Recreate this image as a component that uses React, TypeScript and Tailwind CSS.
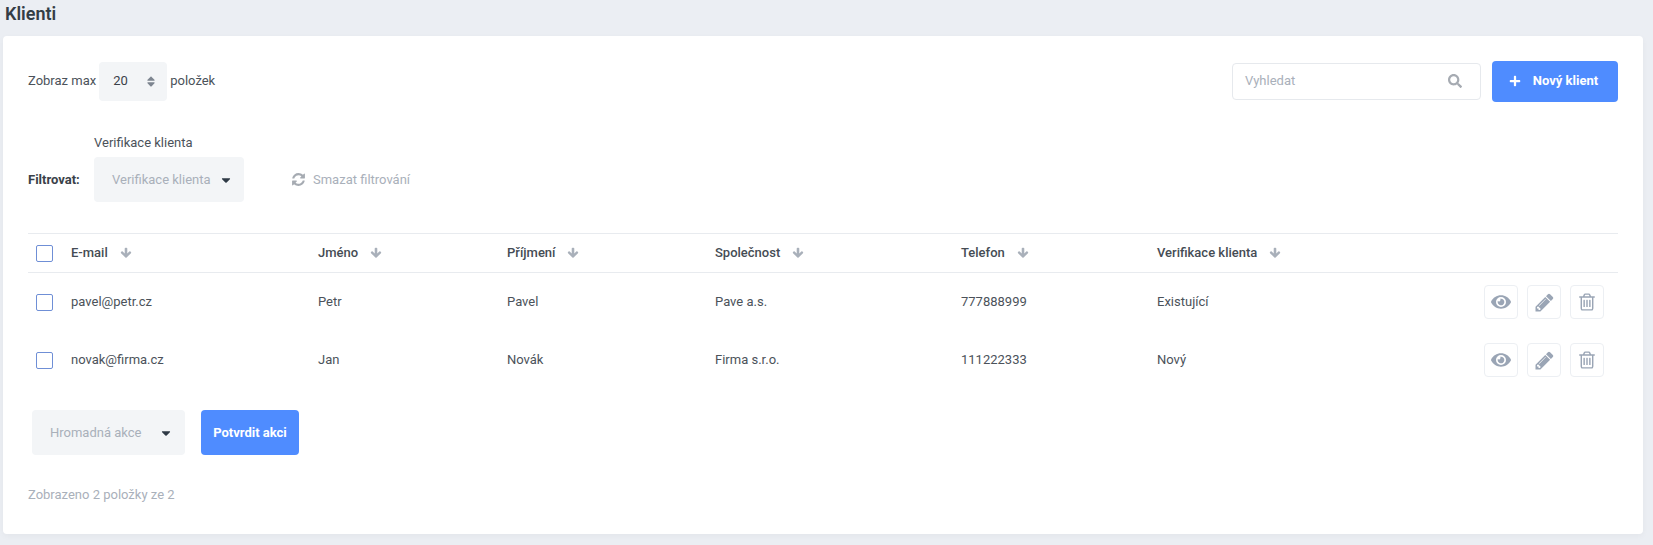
import { FaPlus, FaSearch, FaSort, FaCaretDown, FaEye } from "react-icons/fa";

const columns = "grid grid-cols-[35px_247px_189px_208px_246px_196px_1fr_auto] items-center";

const paths = {
  pencil: "M491 1536l91-91-235-235-91 91v107h128v128h107zm523-928q0-22-22-22-10 0-17 7l-542 542q-7 7-7 17 0 22 22 22 10 0 17-7l542-542q7-7 7-17zm-54-192l416 416-832 832h-416v-416zm683 96q0 53-37 90l-166 166-416-416 166-165q36-38 90-38 53 0 91 38l235 234q37 39 37 91z",
  trash: "M704 736v576q0 14-9 23t-23 9h-64q-14 0-23-9t-9-23v-576q0-14 9-23t23-9h64q14 0 23 9t9 23zm256 0v576q0 14-9 23t-23 9h-64q-14 0-23-9t-9-23v-576q0-14 9-23t23-9h64q14 0 23 9t9 23zm256 0v576q0 14-9 23t-23 9h-64q-14 0-23-9t-9-23v-576q0-14 9-23t23-9h64q14 0 23 9t9 23zm128 724v-948h-896v948q0 22 7 40.500t14.500 27 10.500 8.500h832q3 0 10.500-8.500t14.500-27 7-40.500zm-672-1076h448l-48-117q-7-9-17-11h-317q-10 2-17 11zm928 32v64q0 14-9 23t-23 9h-96v948q0 83-47 143.500t-113 60.500h-832q-66 0-113-58.500t-47-141.500v-952h-96q-14 0-23-9t-9-23v-64q0-14 9-23t23-9h309l70-167q15-37 54-63t79-26h320q40 0 79 26t54 63l70 167h309q14 0 23 9t9 23z",
  refresh: "M1639 1056q0 5-1 7-64 268-268 434.500t-478 166.500q-146 0-282.500-55t-243.500-157l-129 129q-19 19-45 19t-45-19-19-45v-448q0-26 19-45t45-19h448q26 0 45 19t19 45-19 45l-137 137q71 66 161 102t187 36q134 0 250-65t186-179q11-17 53-117 8-23 30-23h192q13 0 22.500 9.500t9.500 22.500zm25-800v448q0 26-19 45t-45 19h-448q-26 0-45-19t-19-45 19-45l138-138q-148-137-349-137-134 0-250 65t-186 179q-11 17-53 117-8 23-30 23h-199q-13 0-22.500-9.500t-9.500-22.500v-7q65-268 270-434.500t480-166.500q146 0 284 55.500t245 156.500l130-129q19-19 45-19t45 19 19 45z",
  arrow: "M1675 832q0 53-37 90l-651 652q-39 37-91 37-53 0-90-37l-651-652q-38-36-38-90 0-53 38-91l74-75q39-37 91-37 53 0 90 37l294 294v-704q0-52 38-90t90-38h128q52 0 90 38t38 90v704l294-294q37-37 90-37 52 0 91 37l75 75q37 39 37 91z",
};

function Icon({ d, className }: { d: string; className: string }) {
  return (
    <svg viewBox="0 0 1792 1792" fill="currentColor" className={className}>
      <path d={d} />
    </svg>
  );
}

function Checkbox() {
  return <span className="block w-[17px] h-[17px] rounded-[2px] border border-[#6f8fd6] bg-white" />;
}

function Head({ label }: { label: string }) {
  return (
    <div className="flex items-center gap-[12px] font-medium text-[#454c54]">
      <span>{label}</span>
      <Icon d={paths.arrow} className="text-[#a9b0ba] w-[12px] h-[12px]" />
    </div>
  );
}

function RowActions() {
  return (
    <div className="flex justify-end gap-[9px] pr-[14px]">
      <button className="w-[34px] h-[34px] flex items-center justify-center border border-[#eceff3] rounded-[4px] text-[#9aa5b5]"><FaEye className="w-[20px] h-[20px]" /></button>
      <button className="w-[34px] h-[34px] flex items-center justify-center border border-[#eceff3] rounded-[4px] text-[#9aa5b5]"><Icon d={paths.pencil} className="w-[21px] h-[21px]" /></button>
      <button className="w-[34px] h-[34px] flex items-center justify-center border border-[#eceff3] rounded-[4px] text-[#9aa5b5]"><Icon d={paths.trash} className="w-[20px] h-[20px]" /></button>
    </div>
  );
}

function Row({ cells }: { cells: string[] }) {
  return (
    <div className={`${columns} h-[58px] pl-[8px] text-[#4b525a]`}>
      <Checkbox />
      {cells.map((c) => <span key={c}>{c}</span>)}
      <RowActions />
    </div>
  );
}

export default function App() {
  return (
    <div className="min-h-[545px] bg-[#ebeef3] text-[13px] text-[#4b525a] font-['Roboto',sans-serif] overflow-hidden">
      <h1 className="h-[36px] pl-[5px] pt-[2px] text-[18px] leading-[24px] font-semibold text-[#343d46]">Klienti</h1>
      <main className="ml-[3px] w-[1640px] h-[498px] bg-white rounded-[4px] px-[25px] pt-[25px] shadow-[0_2px_6px_rgba(0,0,0,0.04)]">
        <div className="flex items-center justify-between h-[40px]">
          <div className="flex items-center gap-[3px]">
            <span>Zobraz max</span>
            <div className="w-[68px] h-[39px] bg-[#f3f5f7] rounded-[4px] flex items-center justify-between pl-[14px] pr-[11px] text-[#3a4149]">
              <span>20</span>
              <FaSort className="w-[10px] h-[13px] text-[#7d8590]" />
            </div>
            <span>položek</span>
          </div>
          <div className="flex items-center gap-[11px]">
            <div className="w-[249px] h-[37px] border border-[#e6e9ed] rounded-[4px] flex items-center justify-between pl-[12px] pr-[18px] text-[#a9b0ba]">
              <span>Vyhledat</span>
              <FaSearch className="w-[14px] h-[14px] text-[#a6abb2]" />
            </div>
            <button className="w-[126px] h-[41px] bg-[#4f8cff] rounded-[4px] text-white font-bold flex items-center justify-center gap-[12px] pr-[3px]">
              <FaPlus className="w-[12px] h-[12px]" />
              <span>Nový klient</span>
            </button>
          </div>
        </div>

        <div className="flex items-end mt-[40px] h-[61px]">
          <span className="w-[66px] h-[45px] leading-[45px] font-bold text-[#3a4149]">Filtrovat:</span>
          <div>
            <div className="h-[16px] mb-[6px] leading-[16px] text-[#4b525a]">Verifikace klienta</div>
            <div className="w-[150px] h-[45px] bg-[#f3f5f7] rounded-[4px] flex items-center justify-between pl-[18px] pr-[11px] text-[#a9b0ba]">
              <span>Verifikace klienta</span>
              <FaCaretDown className="w-[14px] h-[14px] text-[#2f3a46]" />
            </div>
          </div>
          <div className="ml-[47px] h-[45px] flex items-center gap-[7px] text-[#a9b0ba]">
            <Icon d={paths.refresh} className="w-[15px] h-[15px] text-[#a6abb2]" />
            <span>Smazat filtrování</span>
          </div>
        </div>

        <div className="mt-[31px]">
          <div className={`${columns} h-[40px] pl-[8px] border-y border-[#e8ebef]`}>
            <Checkbox />
            <Head label="E-mail" />
            <Head label="Jméno" />
            <Head label="Příjmení" />
            <Head label="Společnost" />
            <Head label="Telefon" />
            <Head label="Verifikace klienta" />
          </div>
          <Row cells={["pavel@petr.cz", "Petr", "Pavel", "Pave a.s.", "777888999", "Existující"]} />
          <Row cells={["novak@firma.cz", "Jan", "Novák", "Firma s.r.o.", "111222333", "Nový"]} />
        </div>

        <div className="flex items-center gap-[16px] mt-[21px] ml-[4px]">
          <div className="w-[153px] h-[45px] bg-[#f3f5f7] rounded-[4px] flex items-center justify-between pl-[18px] pr-[12px] text-[#a9b0ba]">
            <span>Hromadná akce</span>
            <FaCaretDown className="w-[14px] h-[14px] text-[#2f3a46]" />
          </div>
          <button className="w-[98px] h-[45px] bg-[#4f8cff] rounded-[4px] text-white font-bold">Potvrdit akci</button>
        </div>

        <div className="mt-[32px] text-[#a9b0ba] leading-[16px]">Zobrazeno 2 položky ze 2</div>
      </main>
    </div>
  );
}
